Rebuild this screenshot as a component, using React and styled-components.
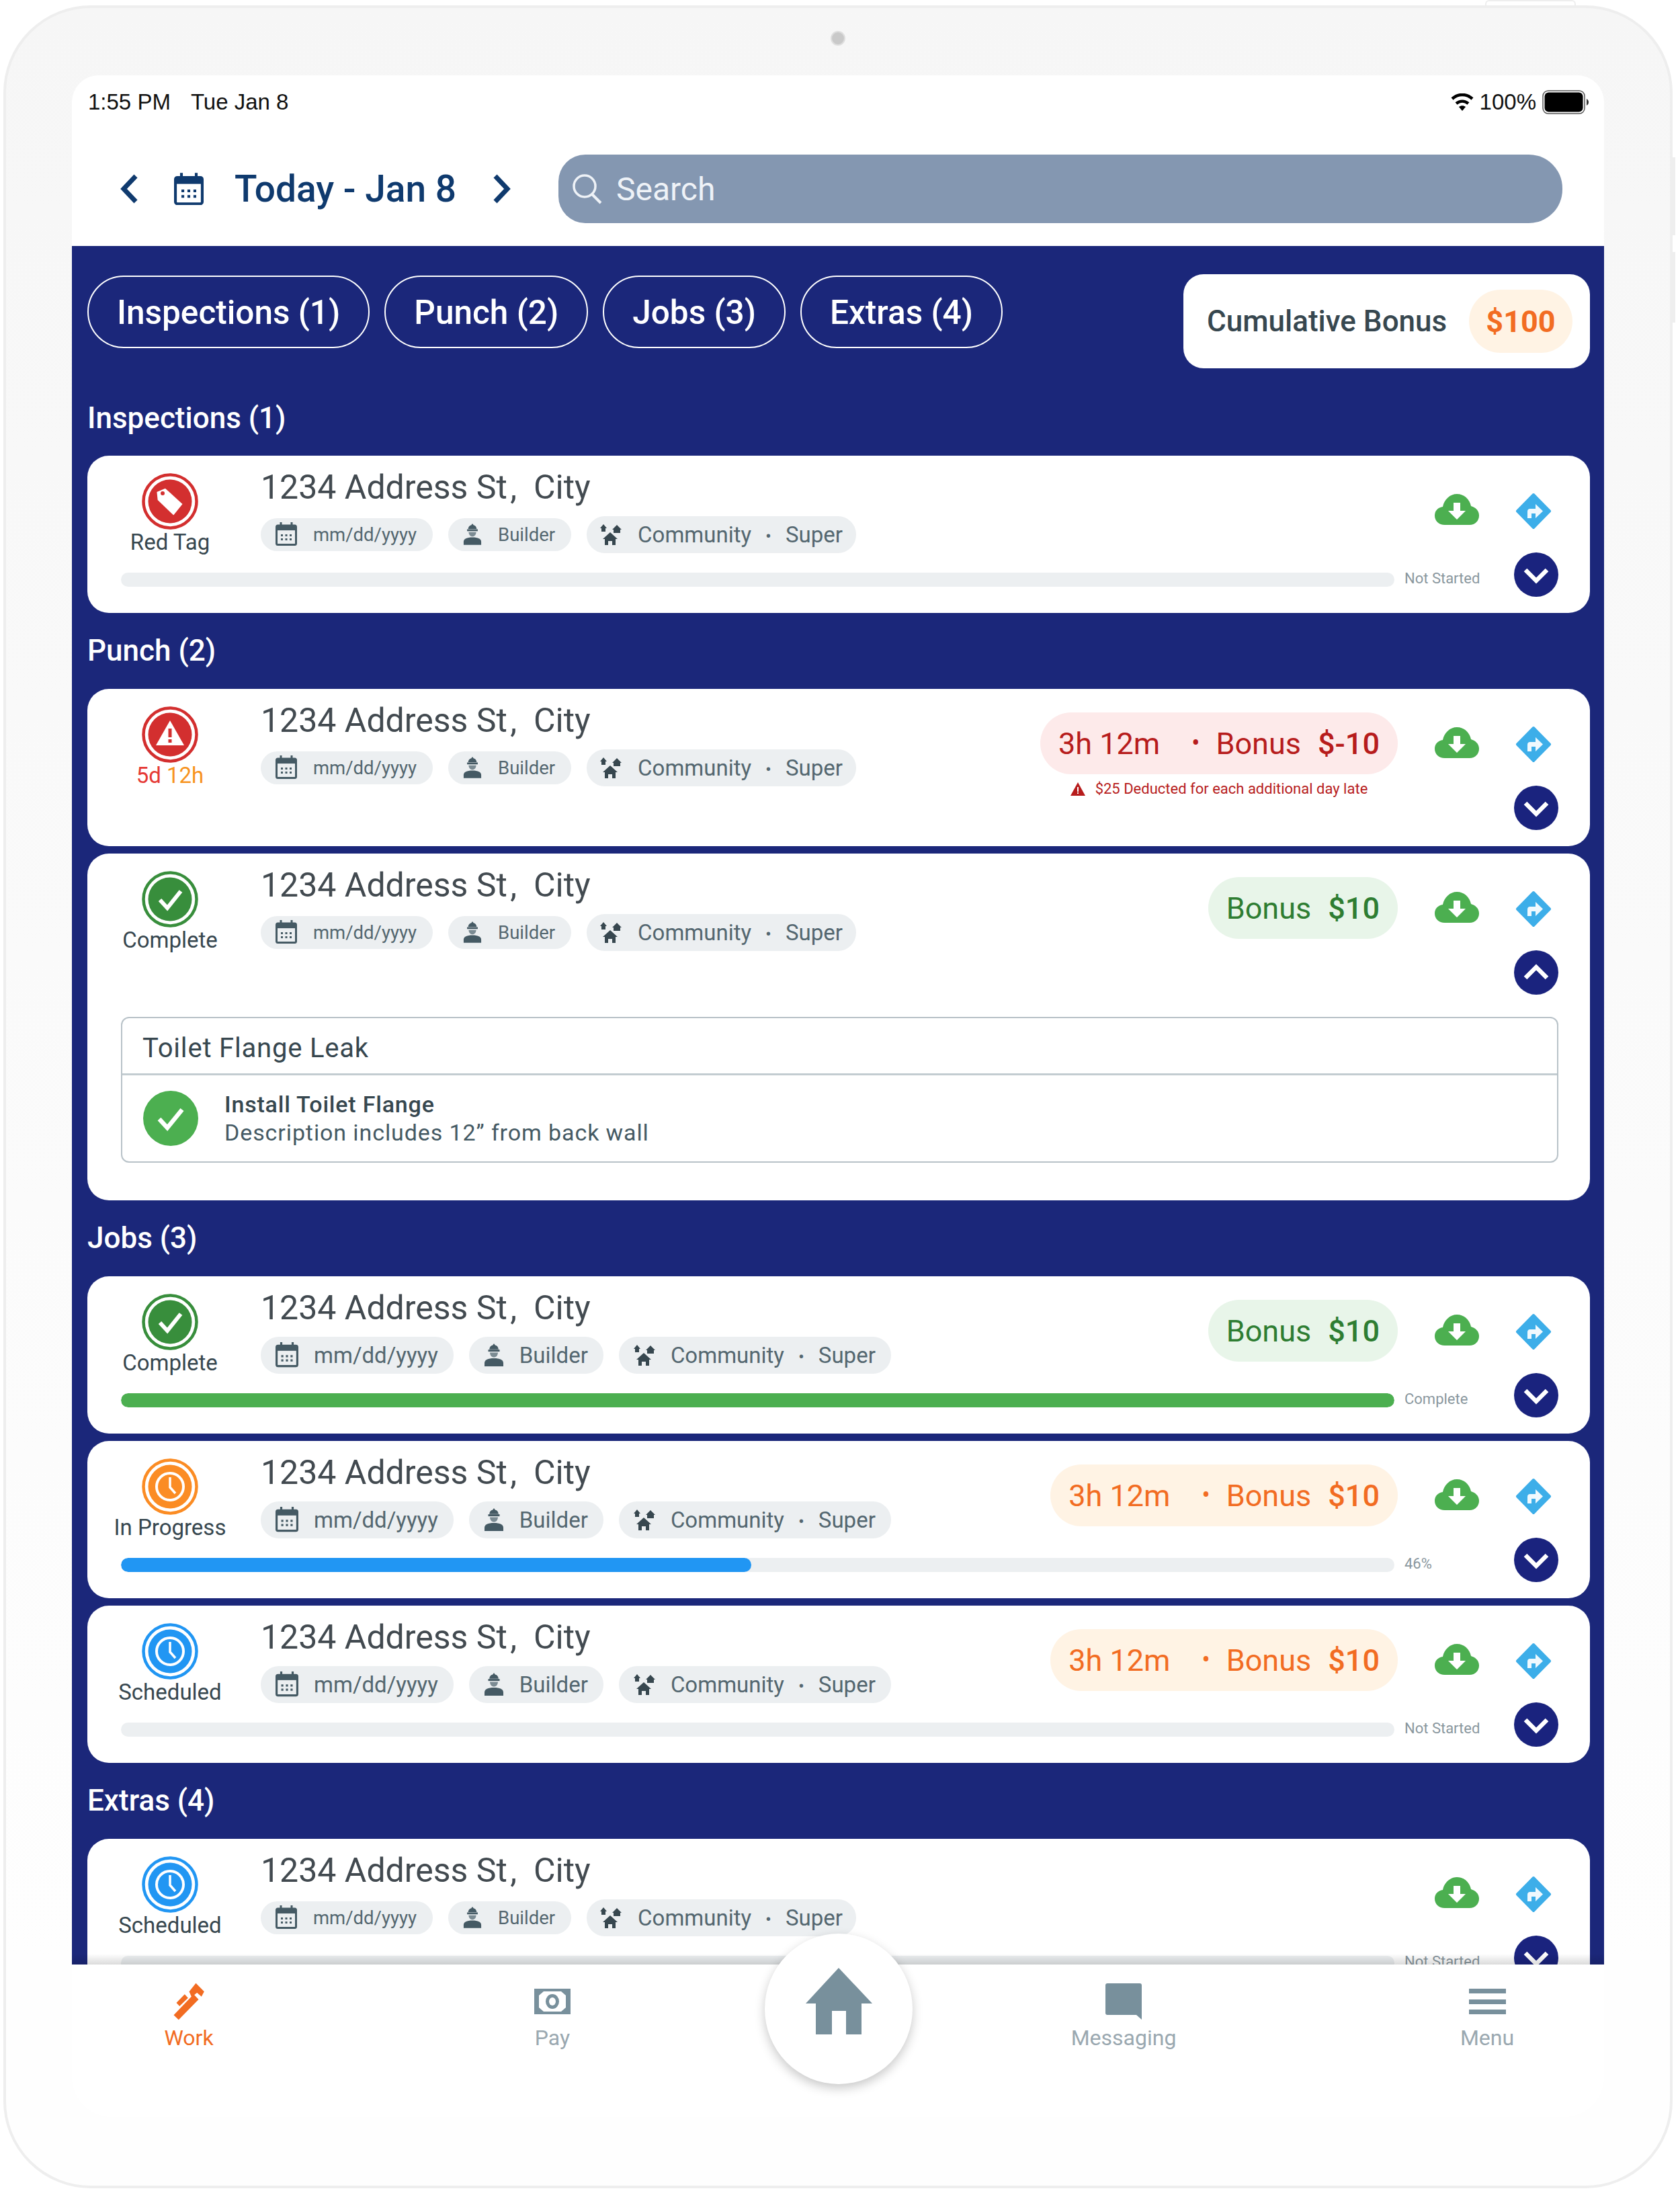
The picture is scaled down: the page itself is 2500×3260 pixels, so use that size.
import styled, { createGlobalStyle } from "styled-components";

const GlobalStyle = createGlobalStyle`
  html, body {
    margin: 0;
    padding: 0;
    background: #fff;
  }
  body {
    width: 2500px;
    height: 3260px;
    overflow: hidden;
    font-family: Roboto, "Liberation Sans", sans-serif;
  }
  * {
    box-sizing: border-box;
  }
`;

const NAVY = "#1b277a";
const SLATE = "#78909c";

const tones = {
  red: { bg: "#fdeaea", fg: "#b71c1c" },
  green: { bg: "#e8f5e9", fg: "#2e7d32" },
  orange: { bg: "#fff3e4", fg: "#f26c22" },
};

const Frame = styled.div`
  position: relative;
  width: 2484px;
  height: 3248px;
  margin: 8px 0 0 5px;
  padding: 34px 98px 0;
  border: 4px solid #eeeeee;
  border-radius: 130px;
  background: linear-gradient(#f6f6f6 0, #f7f7f7 300px, #fefefe 2900px);
`;
const TopButton = styled.div`
  position: absolute;
  top: -12px;
  right: 140px;
  width: 135px;
  height: 8px;
  border: 2px solid #eeeeee;
  border-bottom: 0;
  border-radius: 6px 6px 0 0;
`;
const SideButton = styled.div`
  position: absolute;
  right: -8px;
  top: ${(props) => props.top}px;
  width: 4px;
  height: ${(props) => props.size}px;
  background: #eeeeee;
`;
const Camera = styled.div`
  width: 22px;
  height: 22px;
  margin: 0 auto 44px;
  border-radius: 50%;
  background: #c9c9c9;
  border: 2px solid #dedede;
`;
const Screen = styled.div`
  position: relative;
  width: 2280px;
  height: 3038px;
  border-radius: 40px 40px 60px 60px;
  background: #fff;
`;

const StatusBar = styled.div`
  display: flex;
  justify-content: space-between;
  align-items: center;
  height: 80px;
  padding: 0 22px 0 24px;
  font-family: "Liberation Sans", sans-serif;
  font-size: 33px;
  color: #111;
`;
const StatusLeft = styled.div`
  display: flex;
  gap: 30px;
`;
const StatusRight = styled.div`
  display: flex;
  align-items: center;
  gap: 9px;
`;

const Header = styled.div`
  display: flex;
  align-items: center;
  height: 174px;
  padding: 4px 62px 0 71px;
`;
const BackGap = styled.div`
  width: 53px;
`;
const Today = styled.div`
  margin: 0 54px 0 46px;
  font-size: 55px;
  font-weight: 500;
  color: #0f3a6e;
  white-space: nowrap;
`;
const Search = styled.div`
  display: flex;
  align-items: center;
  flex: 1;
  gap: 20px;
  height: 102px;
  margin-left: 70px;
  padding-left: 20px;
  border-radius: 40px 50px 50px 40px;
  background: #8497b1;
  font-size: 48px;
  color: #eef2f7;
`;

const Main = styled.div`
  height: 2557px;
  padding: 42px 21px 0 23px;
  overflow: hidden;
  background: ${NAVY};
`;
const FilterRow = styled.div`
  display: flex;
  justify-content: space-between;
  align-items: flex-start;
`;
const Filters = styled.div`
  display: flex;
  gap: 22px;
  padding-top: 2px;
`;
const Filter = styled.div`
  display: flex;
  align-items: center;
  height: 108px;
  padding: 2px 42px 0;
  border: 2px solid #fff;
  border-radius: 54px;
  font-size: 49.5px;
  font-weight: 500;
  color: #fff;
`;
const BonusBox = styled.div`
  display: flex;
  align-items: center;
  justify-content: space-between;
  width: 605px;
  height: 140px;
  padding: 0 26px 0 35px;
  border-radius: 30px;
  background: #fff;
  font-size: 44px;
  font-weight: 500;
  color: #37474f;
`;
const BonusValue = styled.div`
  display: flex;
  align-items: center;
  justify-content: center;
  width: 154px;
  height: 94px;
  border-radius: 47px;
  background: #fff3e4;
  font-size: 45px;
  font-weight: 700;
  color: #f26c22;
`;

const SectionTitle = styled.div`
  height: 60px;
  margin: ${(props) => (props.first ? "44px 0 26px" : "26px 0 27px")};
  font-size: 44px;
  font-weight: 500;
  line-height: 60px;
  color: #fff;
`;
const Cards = styled.div`
  display: flex;
  flex-direction: column;
  gap: 11px;
`;
const Card = styled.div`
  padding: 0 47px 24px 50px;
  border-radius: 32px;
  background: #fff;
`;
const TopRow = styled.div`
  display: flex;
  align-items: flex-start;
  height: 144px;
`;
const StatusCol = styled.div`
  display: flex;
  flex-direction: column;
  align-items: center;
  flex: none;
  width: 210px;
  margin: 26px 30px 0 -32px;
`;
const StatusLabel = styled.div`
  margin-top: -1px;
  font-size: 33px;
  line-height: 40px;
  color: #37474f;
  white-space: nowrap;
`;
const Red = styled.span`
  color: #e53935;
`;
const Amber = styled.span`
  color: #f7931e;
`;
const Info = styled.div`
  flex: none;
`;
const Address = styled.div`
  height: 60px;
  margin-top: 17px;
  font-size: 50px;
  line-height: 60px;
  color: #424a50;
  white-space: pre;
`;
const Comma = styled.span`
  word-spacing: -8px;
`;
const Chips = styled.div`
  display: flex;
  align-items: center;
  gap: 23px;
  height: 56px;
  margin-top: 12px;
`;
const Chip = styled.div`
  display: flex;
  align-items: center;
  gap: ${(props) => (props.$large ? 23 : 24)}px;
  height: ${(props) => (props.$large || props.$wide ? 55 : 49)}px;
  padding: ${(props) =>
    props.$large ? "0 23px 0 22px" : props.$wide ? "0 20px" : "0 24px 0 22px"};
  border-radius: 27px;
  background: #eceff1;
  font-size: ${(props) => (props.$large || props.$wide ? 33 : 27.5)}px;
  color: #546770;
  white-space: nowrap;
`;
const Dot = styled.span`
  margin: 0 21px;
  font-size: 0.8em;
`;
const BonusCol = styled.div`
  display: flex;
  flex-direction: column;
  align-items: center;
  margin: 35px 0 0 auto;
`;
const BonusPill = styled.div`
  display: flex;
  align-items: center;
  height: 92px;
  padding: 0 27px;
  border-radius: 46px;
  background: ${(props) => tones[props.$tone].bg};
  font-size: 45px;
  color: ${(props) => tones[props.$tone].fg};
  white-space: pre;
`;
const PillDot = styled.span`
  margin: 0 24px 0 47px;
  font-size: 0.8em;
`;
const PillAmount = styled.strong`
  margin-left: 25px;
  font-weight: 500;
`;
const LateNote = styled.div`
  display: flex;
  align-items: center;
  gap: 15px;
  margin-top: 9px;
  font-size: 22px;
  color: #b71c1c;
  white-space: nowrap;
`;
const CloudWrap = styled.div`
  flex: none;
  width: 66px;
  margin: 57px 54px 0 ${(props) => (props.$pushed ? "55px" : "auto")};
`;
const DiamondWrap = styled.div`
  flex: none;
  width: 54px;
  margin: 55px 10px 0 0;
`;
const BottomRow = styled.div`
  display: flex;
  align-items: flex-start;
  height: 66px;
`;
const Track = styled.div`
  flex: none;
  width: 1895px;
  height: 21px;
  margin-top: 30px;
  border-radius: 11px;
  background: #eceff1;
  overflow: hidden;
`;
const Fill = styled.div`
  height: 100%;
  border-radius: 11px;
  background: ${(props) => props.$color};
`;
const TrackLabel = styled.div`
  flex: none;
  margin: 26px 0 0 15px;
  font-size: 22px;
  line-height: 26px;
  color: #8a979e;
`;
const ToggleWrap = styled.div`
  flex: none;
  width: 66px;
  height: 66px;
  margin-left: auto;
`;

const Detail = styled.div`
  margin: 33px 0 32px;
  border: 2px solid #b8c2c8;
  border-radius: 12px;
`;
const DetailHead = styled.div`
  height: 85px;
  padding-left: 30px;
  border-bottom: 3px solid #c3ccd1;
  font-size: 40px;
  letter-spacing: 0.8px;
  line-height: 90px;
  color: #37474f;
`;
const DetailBody = styled.div`
  display: flex;
  align-items: center;
  gap: 39px;
  height: 128px;
  padding-left: 31px;
`;
const DetailTitle = styled.div`
  font-size: 34px;
  font-weight: 500;
  letter-spacing: 0.8px;
  line-height: 42px;
  color: #37474f;
`;
const DetailText = styled.div`
  font-size: 34px;
  letter-spacing: 0.9px;
  line-height: 42px;
  color: #455a64;
`;

const Nav = styled.div`
  position: relative;
  display: grid;
  grid-template-columns: 348px 734px 116px 734px 348px;
  height: 225px;
  border-radius: 0 0 60px 60px;
  background: #fff;
  &::before {
    content: "";
    position: absolute;
    left: 0;
    right: 0;
    top: -16px;
    height: 16px;
    background: linear-gradient(rgba(0, 0, 0, 0), rgba(0, 0, 0, 0.14));
  }
`;
const NavItem = styled.div`
  display: flex;
  flex-direction: column;
  align-items: center;
  height: 130px;
  padding-top: 26px;
  font-size: 32px;
  color: ${(props) => (props.$active ? "#f26c22" : "#9aa8b0")};
`;
const NavIcon = styled.div`
  display: flex;
  align-items: center;
  justify-content: center;
  height: 58px;
  margin-bottom: 6px;
`;
const HomeButton = styled.div`
  position: absolute;
  left: 1031px;
  top: -46px;
  display: flex;
  align-items: center;
  justify-content: center;
  width: 220px;
  height: 224px;
  padding-bottom: 24px;
  border-radius: 50%;
  background: #fff;
  box-shadow: 0 6px 16px rgba(0, 0, 0, 0.22);
`;

const CalendarIcon = ({ size = 32, color = "#455a64", stroke = 3 }) => (
  <svg width={size} height={size * 1.1} viewBox="0 0 32 35">
    <rect x="1.5" y="5" width="29" height="28.5" rx="2" fill="none" stroke={color} strokeWidth={stroke} />
    <rect x="1.5" y="5" width="29" height="7" fill={color} />
    <path d="M8 0v7M24 0v7" stroke={color} strokeWidth={stroke} />
    <path d="M8 18h3v3H8zM14.5 18h3v3h-3zM21 18h3v3h-3zM8 24h3v3H8zM14.5 24h3v3h-3zM21 24h3v3h-3z" fill={color} />
  </svg>
);

const BuilderIcon = ({ size = 30 }) => (
  <svg width={size} height={size * 1.14} viewBox="0 0 30 34">
    <path d="M15 0l1.800 2.400c3 .5 4.700 2.900 5 6.200H8.200c.3-3.300 2-5.700 5-6.200z" fill="#455a64" />
    <rect x="6.500" y="9" width="17" height="3" fill="#455a64" />
    <path d="M9 13.500h12c-.3 4.500-2.700 7-6 7s-5.700-2.500-6-7z" fill="#7b8b93" />
    <path d="M1 34v-5c0-4.500 5-7 14-7s14 2.500 14 7v5z" fill="#455a64" />
  </svg>
);

const CommunityIcon = () => (
  <svg width="32" height="31" viewBox="0 0 32 31">
    <path d="M5 0l5 6H8v5H2V6H0z" fill="#37474f" />
    <path d="M25 1l7 7h-2v5H20V8h-2z" fill="#37474f" />
    <path d="M15 12l11 10h-3v9h-5v-6h-6v6H7v-9H4z" fill="#37474f" />
  </svg>
);

const ringColors = {
  red: "#d32f2f",
  green: "#388e3c",
  orange: "#fb8c24",
  blue: "#2196f3",
};

const StatusIcon = ({ kind, tone }) => {
  const color = ringColors[tone];
  return (
    <svg width="84" height="84" viewBox="0 0 84 84">
      <circle cx="42" cy="42" r="39.500" fill="none" stroke={color} strokeWidth="4.500" />
      <circle cx="42" cy="42" r="32.500" fill={color} />
      {kind === "tag" && (
        <g>
          <path d="M24 26l13-4 23 26-15 15-21-25z" fill="#fff" transform="rotate(-6 42 42)" />
          <circle cx="31" cy="30" r="3" fill={color} />
        </g>
      )}
      {kind === "warning" && (
        <g>
          <path d="M42 21l21 37H21z" fill="#fff" />
          <path d="M39.500 33h5v13h-5zM39.500 49h5v5h-5z" fill={color} />
        </g>
      )}
      {kind === "check" && (
        <path d="M27 43l11 12 20-25" fill="none" stroke="#fff" strokeWidth="6" />
      )}
      {kind === "clock" && (
        <g fill="none" stroke="#fff">
          <circle cx="42" cy="42" r="20" strokeWidth="4" />
          <path d="M42 28v15l8 9" strokeWidth="3.500" />
        </g>
      )}
    </svg>
  );
};

const CloudIcon = () => (
  <svg width="66" height="46" viewBox="0 0 66 46">
    <path d="M15 46C6 46 0 40 0 32C0 25 5 20 12 19C14 8 23 0 33 0C44 0 52 8 54 18C61 20 66 25 66 32C66 40 60 46 52 46Z" fill="#4caf50" />
    <path d="M28 13h10v12h8L33 38 20 25h8z" fill="#fff" />
  </svg>
);

const DiamondIcon = () => (
  <svg width="54" height="55" viewBox="0 0 54 55">
    <path d="M27 3l24 24.500L27 52 3 27.500z" fill="#3daee9" stroke="#3daee9" strokeWidth="4" strokeLinejoin="round" />
    <path d="M18 38V28c0-2.500 1.500-4 4-4h8v-7l11 10.500L30 38v-7h-6v7z" fill="#fff" opacity="0.92" />
  </svg>
);

const ToggleIcon = ({ open }) => (
  <svg width="66" height="66" viewBox="0 0 66 66">
    <circle cx="33" cy="33" r="33" fill="#1a237e" />
    <path
      d={open ? "M17 41l16-16 16 16" : "M17 26l16 16 16-16"}
      fill="none"
      stroke="#fff"
      strokeWidth="6.500"
    />
  </svg>
);

const CheckBadge = () => (
  <svg width="82" height="82" viewBox="0 0 82 82">
    <circle cx="41" cy="41" r="41" fill="#4caf50" />
    <path d="M24 42l12 13 22-27" fill="none" stroke="#fff" strokeWidth="6.500" />
  </svg>
);

const statusMeta = {
  redTag: { kind: "tag", tone: "red", label: "Red Tag" },
  late: { kind: "warning", tone: "red", label: (<><Red>5d</Red> <Amber>12h</Amber></>) },
  complete: { kind: "check", tone: "green", label: "Complete" },
  progress: { kind: "clock", tone: "orange", label: "In Progress" },
  scheduled: { kind: "clock", tone: "blue", label: "Scheduled" },
};

const JobCard = ({ status, large, time, bonus, tone, note, open, progress, barColor, barLabel, children }) => {
  const meta = statusMeta[status];
  return (
    <Card>
      <TopRow>
        <StatusCol>
          <StatusIcon kind={meta.kind} tone={meta.tone} />
          <StatusLabel>{meta.label}</StatusLabel>
        </StatusCol>
        <Info>
          <Address>
            1234 Address St<Comma> ,</Comma>{"  "}City
          </Address>
          <Chips>
            <Chip $large={large}>
              <CalendarIcon size={large ? 34 : 32} />
              mm/dd/yyyy
            </Chip>
            <Chip $large={large}>
              <BuilderIcon size={large ? 30 : 28} />
              Builder
            </Chip>
            <Chip $large={large} $wide>
              <CommunityIcon />
              <span>
                Community<Dot>•</Dot>Super
              </span>
            </Chip>
          </Chips>
        </Info>
        {bonus && (
          <BonusCol>
            <BonusPill $tone={tone}>
              {time && (
                <>
                  <span>{time}</span>
                  <PillDot>•</PillDot>
                </>
              )}
              <span>Bonus</span>
              <PillAmount>{bonus}</PillAmount>
            </BonusPill>
            {note && (
              <LateNote>
                <svg width="22" height="20" viewBox="0 0 22 20">
                  <path d="M11 0l11 20H0z" fill="#b71c1c" />
                  <path d="M10 7h2v7h-2zM10 15h2v2h-2z" fill="#fff" />
                </svg>
                {note}
              </LateNote>
            )}
          </BonusCol>
        )}
        <CloudWrap $pushed={!!bonus}>
          <CloudIcon />
        </CloudWrap>
        <DiamondWrap>
          <DiamondIcon />
        </DiamondWrap>
      </TopRow>
      <BottomRow>
        {barLabel && (
          <>
            <Track>
              {progress > 0 && <Fill $color={barColor} style={{ width: `${progress}%` }} />}
            </Track>
            <TrackLabel>{barLabel}</TrackLabel>
          </>
        )}
        <ToggleWrap>
          <ToggleIcon open={open} />
        </ToggleWrap>
      </BottomRow>
      {children}
    </Card>
  );
};

const App = () => {
  return (
    <>
      <GlobalStyle />
      <Frame>
        <TopButton />
        <SideButton top={222} size={116} />
        <SideButton top={363} size={105} />
        <Camera />
        <Screen>
          <StatusBar>
            <StatusLeft>
              <span>1:55 PM</span>
              <span>Tue Jan 8</span>
            </StatusLeft>
            <StatusRight>
              <svg width="34" height="26" viewBox="0 0 34 26">
                <path d="M17 26l-5-6c3-2.500 7-2.500 10 0z" fill="#000" />
                <path d="M8 15c5.500-4.500 12.500-4.500 18 0M2 8c9-8 21-8 30 0" fill="none" stroke="#000" strokeWidth="4.500" />
              </svg>
              <span>100%</span>
              <svg width="70" height="36" viewBox="0 0 70 36">
                <rect x="1" y="1" width="62" height="34" rx="8" fill="#fff" stroke="#555" strokeWidth="1.500" />
                <rect x="3.500" y="3.500" width="57" height="29" rx="6" fill="#000" />
                <path d="M66 13c2 1 3 3 3 5s-1 4-3 5z" fill="#333" />
              </svg>
            </StatusRight>
          </StatusBar>
          <Header>
            <svg width="28" height="44" viewBox="0 0 28 44">
              <path d="M24 3L6 22l18 19" fill="none" stroke="#0f3a6e" strokeWidth="7" />
            </svg>
            <BackGap />
            <CalendarIcon size={44} color="#0f3a6e" stroke={3} />
            <Today>Today - Jan 8</Today>
            <svg width="28" height="44" viewBox="0 0 28 44">
              <path d="M4 3l18 19L4 41" fill="none" stroke="#0f3a6e" strokeWidth="7" />
            </svg>
            <Search>
              <svg width="46" height="46" viewBox="0 0 46 46">
                <circle cx="19" cy="19" r="16" fill="none" stroke="#eef2f7" strokeWidth="3.500" />
                <path d="M30 31l13 13" stroke="#eef2f7" strokeWidth="4" />
              </svg>
              Search
            </Search>
          </Header>
          <Main>
            <FilterRow>
              <Filters>
                <Filter>Inspections (1)</Filter>
                <Filter>Punch (2)</Filter>
                <Filter>Jobs (3)</Filter>
                <Filter>Extras (4)</Filter>
              </Filters>
              <BonusBox>
                Cumulative Bonus
                <BonusValue>$100</BonusValue>
              </BonusBox>
            </FilterRow>

            <SectionTitle first>Inspections (1)</SectionTitle>
            <Cards>
              <JobCard status="redTag" progress={0} barLabel="Not Started" />
            </Cards>

            <SectionTitle>Punch (2)</SectionTitle>
            <Cards>
              <JobCard
                status="late"
                time="3h 12m"
                bonus="$-10"
                tone="red"
                note="$25 Deducted for each additional day late"
              />
              <JobCard status="complete" bonus="$10" tone="green" open>
                <Detail>
                  <DetailHead>Toilet Flange Leak</DetailHead>
                  <DetailBody>
                    <CheckBadge />
                    <div>
                      <DetailTitle>Install Toilet Flange</DetailTitle>
                      <DetailText>Description includes 12” from back wall</DetailText>
                    </div>
                  </DetailBody>
                </Detail>
              </JobCard>
            </Cards>

            <SectionTitle>Jobs (3)</SectionTitle>
            <Cards>
              <JobCard large status="complete" bonus="$10" tone="green" progress={100} barColor="#4caf50" barLabel="Complete" />
              <JobCard large status="progress" time="3h 12m" bonus="$10" tone="orange" progress={49.5} barColor="#2196f3" barLabel="46%" />
              <JobCard large status="scheduled" time="3h 12m" bonus="$10" tone="orange" progress={0} barLabel="Not Started" />
            </Cards>

            <SectionTitle>Extras (4)</SectionTitle>
            <Cards>
              <JobCard status="scheduled" progress={0} barLabel="Not Started" />
            </Cards>
          </Main>
          <Nav>
            <NavItem $active>
              <NavIcon>
                <svg width="47" height="56" viewBox="85 60 140 168">
                  <path d="M86 205l79-83-10-22 30-38 37 38-12 22-20-17-12 10 19 20-89 91z" fill="#f26c22" />
                  <path d="M98 150l37-38 15 16-38 37z" fill="#f26c22" />
                </svg>
              </NavIcon>
              Work
            </NavItem>
            <NavItem>
              <NavIcon>
                <svg width="54" height="38" viewBox="0 0 54 38">
                  <path fillRule="evenodd" d="M0 0h54v38H0zM14 4L7 10v18l7 6h26l7-6V10l-7-6z" fill={SLATE} />
                  <ellipse cx="27" cy="19" rx="10" ry="11" fill={SLATE} />
                  <ellipse cx="27" cy="19" rx="5" ry="6" fill="#fff" />
                </svg>
              </NavIcon>
              Pay
            </NavItem>
            <div />
            <NavItem>
              <NavIcon>
                <svg width="54" height="54" viewBox="0 0 54 54">
                  <path d="M3 0h48a3 3 0 0 1 3 3v51l-8-7H3a3 3 0 0 1-3-3V3a3 3 0 0 1 3-3z" fill={SLATE} />
                </svg>
              </NavIcon>
              Messaging
            </NavItem>
            <NavItem>
              <NavIcon>
                <svg width="55" height="38" viewBox="0 0 55 38">
                  <path d="M0 0h55v7H0zM0 16h55v7H0zM0 31h55v7H0z" fill={SLATE} />
                </svg>
              </NavIcon>
              Menu
            </NavItem>
            <HomeButton>
              <svg width="99" height="99" viewBox="0 0 99 99">
                <path d="M49 0l50 53H83v46H60V64H39v35H15V53H0z" fill={SLATE} />
              </svg>
            </HomeButton>
          </Nav>
        </Screen>
      </Frame>
    </>
  );
};

export default App;
